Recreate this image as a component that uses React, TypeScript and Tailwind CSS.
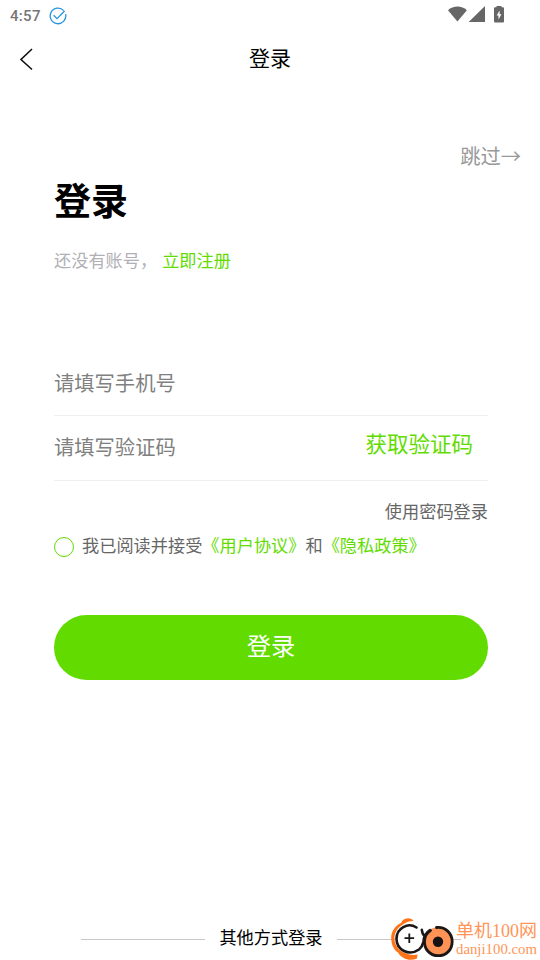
const BackIcon = () => (
    <svg className="w-4 h-6" viewBox="0 0 16 24" fill="none" stroke="#111" strokeWidth="1.6">
        <path d="M14 2 3 12.5 14 22.5" />
    </svg>
);

const StatusBar = () => (
    <div className="flex h-8 items-center justify-between pl-2.5 pr-[35px]">
        <div className="flex items-center gap-[7px]">
            <span className="w-8 font-['Roboto',sans-serif] text-[15px] font-medium leading-8 tracking-[0.3px] text-[#757575]">4:57</span>
            <svg className="h-[18px] w-[18px]" viewBox="0 0 18 18" fill="none" stroke="#2795dc" strokeWidth="1.3">
                <path d="M14.7 3.6A7.8 7.8 0 1 0 16.6 7.2" />
                <path d="M4.6 8.3 8 11.6 15.6 4" />
            </svg>
        </div>
        <div className="flex items-center pb-[3px]">
            <svg className="h-[18px] w-[58px]" viewBox="0 0 58 18" fill="#666">
                <path d="M1 4.2C6.3-.7 14.6-.7 19.9 4.2L10.4 15.5Z" />
                <path d="M38 0V16H21.7Z" />
                <path d="M49.5 1.2V0h5v1.2H56a1 1 0 0 1 1 1V15.500a1 1 0 0 1-1 1h-8a1 1 0 0 1-1-1V2.2a1 1 0 0 1 1-1Z" />
                <path fill="#fff" d="M52.6 4.5 49.7 9.5h1.8V13.500l2.900-5.300h-1.800Z" />
            </svg>
        </div>
    </div>
);

const Watermark = () => (
    <div className="absolute left-[390px] top-[916px] flex h-11 w-[150px] font-['Liberation_Serif','Noto_Sans_CJK_SC',serif] text-[#ff9557]">
        <svg className="h-11 w-[65px] shrink-0" viewBox="0 0 65 44" fill="none">
            <path fill="#ff7417" d="M23.500 5C21.500 1.800 16.500 1.200 12.500 4.500L11 7C5.500 9.500 1 15 1.200 22.500 1.400 29 4 34 8 36.500 11.500 43 20 45.500 27 42.500 L27.500 38.500C20 40.500 10.500 36 7.500 31.500 2 24 4 13.500 13 8.500 16 6 20 5 23.500 5Z" />
            <circle cx="19.500" cy="22.800" r="13" fill="#fff" />
            <path stroke="#1b1717" strokeWidth="2.600" strokeLinecap="round" d="M26.500 11.500C18 6 6.500 12 6.500 22.800 6.500 34 19 40.500 29 33.500 31 32 32.500 29.500 33 27" />
            <path stroke="#1b1717" strokeWidth="1.800" d="M19.300 17.500v9.500M14.500 22.200h9.600" />
            <path stroke="#1b1717" strokeWidth="2.600" strokeLinecap="round" d="M31.800 13.800C32 16.500 33 19 35 21M40 14C36 16.500 33.500 21 33.500 26" />
            <circle cx="48" cy="25.500" r="14.200" fill="#ff9255" />
            <path stroke="#1b1717" strokeWidth="2.800" strokeLinecap="round" d="M46.500 11.500C55.500 10.500 62.200 17.500 62.200 25.500 62.200 35 55 39.700 48.500 39.700 39 39.700 34 32 34.500 25 34.800 20 38 16 40.500 14.500" />
            <circle cx="48" cy="25.800" r="5.200" fill="#171313" />
        </svg>
        <div className="ml-px pt-[5px]">
            <div className="whitespace-nowrap text-[18px] leading-[20px]">单机100网</div>
            <div className="whitespace-nowrap text-[14.8px] leading-[17px]">danji100.com</div>
        </div>
    </div>
);

const App = () => {
    return (
        <div className="relative h-[960px] w-[540px] overflow-hidden bg-white font-['Noto_Sans_CJK_SC',sans-serif] text-black">
            <StatusBar />

            <header className="grid h-[54px] grid-cols-[60px_1fr_60px] items-center">
                <button className="pl-[18px]"><BackIcon /></button>
                <h1 className="pb-[5px] text-center text-[21px] leading-[30px]">登录</h1>
            </header>

            <div className="mt-[54px] h-[30px] pr-[19px] text-right text-[20.3px] leading-[30px] text-[#999]">跳过→</div>

            <main className="ml-[54px] w-[434px]">
                <h2 className="mt-[5px] h-12 text-[37px] font-bold leading-[48px]">登录</h2>
                <p className="mt-6 flex h-[25px] text-[17.2px] leading-[25px] text-[#b0b0b5]">
                    还没有账号，
                    <a className="ml-[5px] text-[#62dc00]">立即注册</a>
                </p>

                <div className="mt-[77px] h-[67px] border-b border-[#eee] text-[20.3px] leading-[66px] text-[#808080]">请填写手机号</div>
                <div className="flex h-[65px] justify-between border-b border-[#eee] pr-[15px]">
                    <span className="text-[20.3px] leading-[60px] text-[#808080]">请填写验证码</span>
                    <button className="h-[54px] text-[21.5px] leading-[54px] text-[#62dc00]">获取验证码</button>
                </div>

                <div className="mt-[17px] h-[25px] text-right text-[17.2px] leading-[25px] text-[#666]">使用密码登录</div>
                <div className="mt-[9px] flex h-[25px] whitespace-nowrap text-[17.2px] leading-[25px] text-[#666]">
                    <span className="mr-2 mt-[5px] h-5 w-5 shrink-0 rounded-full border border-[#62dc00]" />
                    我已阅读并接受
                    <a className="text-[#62dc00]">《用户协议》</a>
                    和
                    <a className="text-[#62dc00]">《隐私政策》</a>
                </div>

                <button className="mt-[58px] block h-[65px] w-full rounded-full bg-[#62dc00] pb-[5px] text-center text-[24.3px] leading-[60px] text-white">
                    登录
                </button>
            </main>

            <footer className="mt-[244px] flex h-[25px] pl-[81px] text-[17.2px] leading-[25px]">
                <i className="mt-[15px] h-px w-[124px] bg-[#c8c8c8]" />
                <span className="w-[132px] text-center">其他方式登录</span>
                <i className="mt-[15px] h-px w-[124px] bg-[#c8c8c8]" />
            </footer>

            <Watermark />
        </div>
    );
};

export default App;
